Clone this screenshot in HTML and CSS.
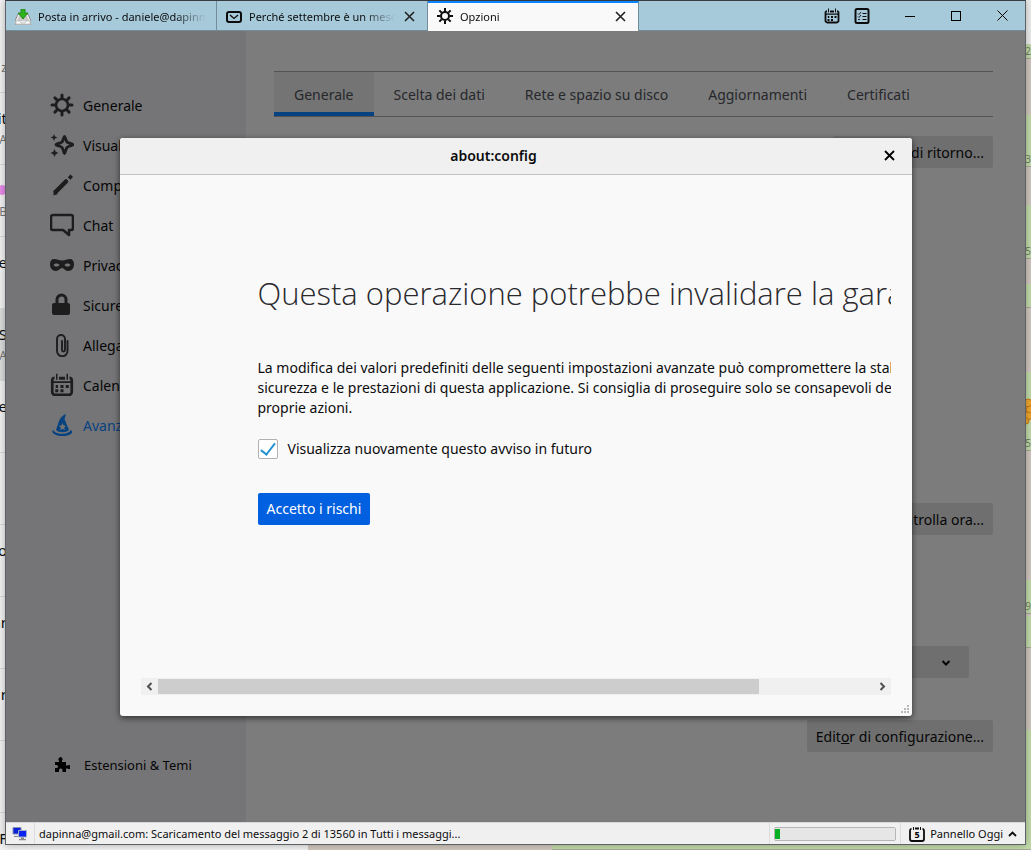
FILE: index.html
```html
<!DOCTYPE html>
<html lang="it">
<head>
    <meta charset="UTF-8">
    <meta name="viewport" content="width=device-width, initial-scale=1.0">
    <title>Opzioni</title>
    <link rel="stylesheet" href="styles.css">
</head>
<body>

    <!-- Chat window behind the mail client -->
    <div class="desktop">
        <div class="chat-list">
            <div class="chat-row"><span>&nbsp;</span><small>z</small></div>
            <div class="chat-row"><span>it</span><small>A</small></div>
            <div class="chat-row"><i class="dot"></i><small>B</small></div>
            <div class="chat-row"><span>e</span></div>
            <div class="chat-row selected"><span>S</span><small>A</small></div>
            <div class="chat-row"><span>e</span></div>
            <div class="chat-row"></div>
            <div class="chat-row"><span>o</span></div>
            <div class="chat-row"><span>ar</span></div>
            <div class="chat-row"><span>r</span></div>
            <div class="chat-row"></div>
            <div class="chat-row"><span>F</span></div>
        </div>
        <div class="chat-wall"></div>
        <div class="bubbles">
            <div class="bubble first">2</div>
            <div class="bubble second">3</div>
            <div class="bubble third">5</div>
            <div class="bubble fourth"></div>
            <div class="bubble fifth">5</div>
            <div class="bubble sixth">9</div>
            <div class="bubble seventh"></div>
            <div class="bubble last"></div>
            <svg class="grapes" width="8" height="30" viewBox="0 0 8 30"><g fill="#f0a72c" stroke="#c87b18"><circle cx="3" cy="5" r="4"/><circle cx="5" cy="12" r="4"/><circle cx="3" cy="18" r="4"/><circle cx="1" cy="23" r="3"/></g></svg>
        </div>
    </div>

    <div class="window">
        <header class="titlebar">
            <nav class="tabs">
                <div class="tab">
                    <svg class="icon16" viewBox="0 0 16 16"><path d="M3 5h10l3 7v4H0v-4z" fill="#eee" stroke="#8b8b8b"/><path d="M2 12l2-5h8l2 5z" fill="#c9c9c9"/><path d="M1 12h4l1 2h4l1-2h4v3H1z" fill="#fff" stroke="#aaa" stroke-width=".6"/><path d="M6 0h4v4h3l-5 6-5-6h3z" fill="#2fb41c" stroke="#187c0d" stroke-width=".8"/></svg>
                    <span class="tab-text">Posta in arrivo - daniele@dapinna.com</span>
                </div>
                <div class="tab">
                    <svg class="icon16" viewBox="0 0 16 16"><rect x="1" y="3" width="14" height="10" rx="2" fill="none" stroke="#0c0c0d" stroke-width="2"/><path d="M4 6l4 3.5L12 6" fill="none" stroke="#0c0c0d" stroke-width="1.3"/></svg>
                    <span class="tab-text">Perché settembre è un mese importante</span>
                    <button class="close" aria-label="Chiudi scheda"><svg width="11" height="11" viewBox="0 0 11 11"><path d="M1 1l9 9M10 1l-9 9"/></svg></button>
                </div>
                <div class="tab active">
                    <svg class="icon16" viewBox="0 0 24 24"><circle cx="12" cy="12" r="6" fill="none" stroke="#0c0c0d" stroke-width="3"/><path d="M12 0v5M12 19v5M0 12h5M19 12h5M3.5 3.5L7 7M17 17l3.500 3.500M20.500 3.500L17 7M7 17l-3.500 3.500" stroke="#0c0c0d" stroke-width="3"/></svg>
                    <span class="tab-text">Opzioni</span>
                    <button class="close" aria-label="Chiudi scheda"><svg width="11" height="11" viewBox="0 0 11 11"><path d="M1 1l9 9M10 1l-9 9"/></svg></button>
                </div>
            </nav>
            <div class="tab-tools">
                <button aria-label="Calendario"><svg class="icon16" viewBox="0 0 16 16"><use href="#calendar"/></svg></button>
                <button aria-label="Attività"><svg class="icon16" viewBox="0 0 16 16"><rect x="1.500" y="1" width="13" height="14" rx="1.500" fill="none" stroke="#0c0c0d" stroke-width="2"/><path d="M8.500 5.500h4M8.500 8.500h4M8.500 11.500h4" stroke="#0c0c0d"/><path d="M4 5.500l1 1 2-2.500M4 8.500l1 1L7 7M4 11.500h2" fill="none" stroke="#0c0c0d" stroke-width=".9"/></svg></button>
            </div>
            <div class="window-buttons">
                <button aria-label="Riduci"><svg width="10" height="10"><path d="M0 5.500h10" stroke="#000"/></svg></button>
                <button aria-label="Ingrandisci"><svg width="10" height="10"><rect x=".5" y=".5" width="9" height="9" fill="none" stroke="#000"/></svg></button>
                <button aria-label="Chiudi"><svg width="11" height="11"><path d="M.5.5l10 10M10.500.5l-10 10" stroke="#000"/></svg></button>
            </div>
        </header>

        <div class="content">
            <aside class="sidebar">
                <a href="#" class="category"><svg viewBox="0 0 24 24"><circle cx="12" cy="12" r="6" class="line" stroke-width="2.600"/><path d="M12 2v3M12 19v3M2 12h3M19 12h3M4.900 4.900L7 7M17 17l2.100 2.100M19.100 4.900L17 7M7 17l-2.100 2.100" class="line" stroke-width="3"/></svg>Generale</a>
                <a href="#" class="category"><svg viewBox="0 0 24 24"><path d="M14.500 3.500c.9 0 1.200 4.200 2.500 5.500s6 1.700 6 2.700-4.700 1.400-6 2.700-1.600 6.100-2.500 6.100-1.200-4.800-2.500-6.100-6-1.700-6-2.700S10.700 10.300 12 9s1.600-5.500 2.500-5.500z" class="line" stroke-width="2.800"/><path d="M4 1l1 2.500L7.500 4.500 5 5.500 4 8 3 5.500.5 4.500 3 3.500zM4.500 16l1.200 2.800L8.500 20l-2.800 1.200L4.500 24l-1.200-2.800L.5 20l2.800-1.200z"/></svg>Visualizzazione</a>
                <a href="#" class="category"><svg viewBox="0 0 24 24"><path d="M6 18.500L16 8.500" class="line" stroke-width="4.500"/><path d="M20.500 1.500l2.500 2.500-2.700 2.700-2.500-2.500z"/><path d="M3.500 17l4.500 4-4.500 1.500z"/></svg>Composizione</a>
                <a href="#" class="category"><svg viewBox="0 0 24 24"><path d="M3 2h18a2 2 0 0 1 2 2v11a2 2 0 0 1-2 2h-2v5l-6-5H3a2 2 0 0 1-2-2V4a2 2 0 0 1 2-2z" class="line" stroke-width="2.600"/></svg>Chat</a>
                <a href="#" class="category"><svg viewBox="0 0 24 24"><path fill-rule="evenodd" d="M4 6c3 0 5 1.500 8 1.500S17 6 20 6c2.500 0 4 2 4 5 0 4-2 7-6 7-3 0-4-3-6-3s-3 3-6 3c-4 0-6-3-6-7 0-3 1.500-5 4-5zM3.500 12C5 14 8 14 9.500 12 8 10 5 10 3.500 12zm11 0c1.500 2 4.500 2 6 0-1.500-2-4.500-2-6 0z"/></svg>Privacy</a>
                <a href="#" class="category"><svg viewBox="0 0 24 24"><path d="M7 11V6.500a4.500 4.500 0 0 1 9 0V11" class="line" stroke-width="3"/><rect x="2" y="10" width="18" height="12" rx="2"/></svg>Sicurezza</a>
                <a href="#" class="category"><svg viewBox="0 0 24 24"><path d="M12 8v9a1.500 1.500 0 0 0 3 0V6a4 4 0 0 0-8 0v12a5 5 0 0 0 10.500 0V8" class="line" stroke-width="1.900"/></svg>Allegati</a>
                <a href="#" class="category"><svg viewBox="0 0 16 16"><g id="calendar"><path d="M3 3.200a1.500 1.500 0 0 0-1.500 1.500v8A1.800 1.800 0 0 0 3.300 14.500h9.400a1.800 1.800 0 0 0 1.800-1.800v-8A1.500 1.500 0 0 0 13 3.200" fill="none" stroke="currentColor" stroke-width="1.800"/><path d="M6 2.500h4v2H6zM2 5.500h12v1.200H2zM4 .5h1v4H4zM11 .5h1v4h-1zM7 8h2v2H7zM10.500 8h2v2h-2zM3.500 10.900h2v2h-2zM7 10.900h2v2H7zM3.800 8h1.500v2H3.800z" fill="currentColor"/></g></svg>Calendario</a>
                <a href="#" class="category current"><svg viewBox="0 0 24 24"><path fill-rule="evenodd" d="M16 1l-1.500 5L19 17c-3 3-10 3-13 0L9 8c1-3 4-6 7-7zm-3.500 9l-1.100 2.500-2.600.3 2 1.700-.6 2.700 2.300-1.400 2.300 1.400-.6-2.700 2-1.700-2.600-.3z"/><path d="M3.500 17c1 5 16 5 17 0 3 1 1.500 3.500-.5 4.500-4 2-11 2-15 0-2-1-4-3.500-1.500-4.500z"/></svg>Avanzate</a>
                <a href="#" class="addons"><svg viewBox="0 0 16 16"><path d="M1 5h4V3.500a2 2 0 1 1 3 0V5h4v3.500h1.500a2 2 0 1 1 0 3H12V15H8.500v-2a1.800 1.800 0 0 0-3.500 0v2H1v-4h1.500a1.500 1.500 0 0 0 0-3H1z"/></svg>Estensioni &amp; Temi</a>
            </aside>

            <main class="main">
                <nav class="pane-tabs">
                    <a href="#" class="pane-tab selected">Generale</a>
                    <a href="#" class="pane-tab">Scelta dei dati</a>
                    <a href="#" class="pane-tab">Rete e spazio su disco</a>
                    <a href="#" class="pane-tab">Aggiornamenti</a>
                    <a href="#" class="pane-tab">Certificati</a>
                </nav>
                <div class="settings">
                    <button class="grey-button">Conferme di ritorno...</button>
                    <button class="grey-button">Controlla ora...</button>
                    <div class="select-wrap">
                        <select aria-label="Lingua"><option>Italiano</option></select>
                        <svg class="arrow" width="10" height="6" viewBox="0 0 10 6"><path d="M1.500 1L5 4.500 8.500 1" fill="none" stroke="#0c0c0d" stroke-width="2"/></svg>
                    </div>
                    <button class="grey-button">Edit<u>o</u>r di configurazione...</button>
                </div>
            </main>

            <!-- Subdialog over the options page -->
            <div class="overlay">
                <section class="dialog" role="dialog" aria-labelledby="dialog-title">
                    <div class="dialog-header">
                        <h2 id="dialog-title">about:config</h2>
                        <button class="close bold" aria-label="Chiudi"><svg width="11" height="11" viewBox="0 0 11 11"><path d="M1 1l9 9M10 1l-9 9"/></svg></button>
                    </div>
                    <div class="frame">
                        <div class="warning">
                            <h1>Questa operazione potrebbe invalidare la garanzia</h1>
                            <p>La modifica dei valori predefiniti delle seguenti impostazioni avanzate può compromettere la stabilità, la<br>sicurezza e le prestazioni di questa applicazione. Si consiglia di proseguire solo se consapevoli delle<br>proprie azioni.</p>
                            <label class="check"><input type="checkbox" checked>Visualizza nuovamente questo avviso in futuro</label>
                            <button class="accept">Accetto i rischi</button>
                        </div>
                        <div class="scrollbar">
                            <button aria-label="Sinistra"><svg width="7" height="9" viewBox="0 0 7 9"><path d="M5.500 1L2 4.500 5.500 8"/></svg></button>
                            <div class="track"><div class="thumb"></div></div>
                            <button aria-label="Destra"><svg width="7" height="9" viewBox="0 0 7 9"><path d="M1.500 1L5 4.500 1.500 8"/></svg></button>
                        </div>
                    </div>
                    <svg class="grip" width="8" height="8" viewBox="0 0 8 8"><path d="M6 0h2v2H6zM3 3h2v2H3zM6 3h2v2H6zM0 6h2v2H0zM3 6h2v2H3zM6 6h2v2H6z" fill="#b8b8b8"/></svg>
                </section>
            </div>
        </div>

        <footer class="statusbar">
            <div class="online"><svg width="16" height="14" viewBox="0 0 16 14"><path d="M1 .5h8v6.500H1z" fill="#0b22d8" stroke="#8791b5"/><path d="M2 9h4v1H2z" fill="#888"/><path d="M6.500 3.500h8v6.500h-8z" fill="#0b22f0" stroke="#a5acc5"/><path d="M9 10.500h3v1.500H9zM7 12h7v1.200H7z" fill="#888"/></svg></div>
            <div class="status-text">dapinna@gmail.com: Scaricamento del messaggio 2 di 13560 in Tutti i messaggi...</div>
            <div class="meter"><progress value="4" max="100" aria-label="Scaricamento"></progress></div>
            <button class="today">
                <svg width="16" height="16" viewBox="0 0 16 16"><path d="M2.500 3Q1 3 1 5v8q0 2 2 2h10q2 0 2-2V5q0-2-1.500-2M6 2.500h4" fill="none" stroke="#0c0c0d" stroke-width="1.800"/><path d="M4.500 1v3M11.500 1v3" stroke="#0c0c0d"/><text x="8" y="12" text-anchor="middle" class="day">5</text></svg>
                Pannello Oggi
                <svg width="9" height="6" viewBox="0 0 9 6"><path d="M1 5l3.500-3.500L8 5" fill="none" stroke="#0c0c0d" stroke-width="1.800"/></svg>
            </button>
        </footer>
    </div>

</body>
</html>
```

FILE: styles.css
```css
* {
    box-sizing: border-box;
}
body {
    margin: 0;
    height: 100vh;
    padding: 0 5px 5px 5px;
    overflow: hidden;
    font-family: "Noto Sans", "Open Sans", sans-serif;
    font-size: 14px;
    color: #0c0c0d;
}
button {
    font: inherit;
    color: inherit;
    border: none;
    background: none;
    padding: 0;
}
a {
    color: inherit;
    text-decoration: none;
}
.icon16 {
    width: 16px;
    height: 16px;
    flex: none;
}

/* desktop behind the window */
.desktop {
    position: absolute;
    inset: 0;
    background: #efefef;
    overflow: hidden;
}
.chat-list {
    width: 308px;
    padding-top: 21px;
    background: #f3f3f3;
}
.chat-row {
    height: 72px;
    width: 7px;
    padding-top: 14px;
    border-bottom: 1px solid #dcdcdc;
    display: flex;
    flex-direction: column;
    align-items: flex-end;
    line-height: 22px;
    font-size: 15px;
    overflow: hidden;
}
.chat-row small {
    font-size: 12px;
    color: #777;
}
.chat-row.selected {
    background: #dcdedd;
}
.dot {
    width: 10px;
    height: 10px;
    margin: 6px 0;
    border-radius: 50%;
    background: #e88be8;
    flex: none;
}
.chat-wall {
    position: absolute;
    left: 308px;
    right: 0;
    top: 44px;
    bottom: 0;
    background: #d2c8bf;
}
.bubbles {
    position: absolute;
    right: 0;
    top: 0;
    bottom: 0;
    width: 479px;
}
.bubble {
    position: absolute;
    left: 0;
    right: 0;
    background: #c3dcaa;
    border-bottom: 1px solid #aaa79a;
    color: #6f8064;
    font-size: 10px;
    line-height: 14px;
    display: flex;
    justify-content: flex-end;
    align-items: flex-end;
}
.first { top: 44px; height: 15px; }
.second { top: 115px; height: 52px; }
.third { top: 205px; height: 54px; }
.fourth { top: 284px; height: 24px; }
.fifth { top: 372px; height: 79px; }
.sixth { top: 580px; height: 34px; }
.seventh { top: 616px; height: 32px; }
.last { top: 730px; bottom: 0; }
.grapes {
    position: absolute;
    right: -2px;
    top: 398px;
}

/* main window */
.window {
    position: relative;
    height: 100%;
    display: flex;
    flex-direction: column;
    border: 1px solid #5d6266;
    border-top-color: #373b40;
    box-shadow: 0 0 8px rgba(0, 0, 0, 0.3);
}
.titlebar {
    height: 30px;
    flex: none;
    display: flex;
    background: #a7cadb;
    border-bottom: 1px solid #718d9a;
    font-size: 11px;
}
.tabs {
    display: flex;
    flex: 1;
}
.tab {
    width: 211px;
    height: 29px;
    display: flex;
    align-items: center;
    padding: 2px 10px 0 9px;
    gap: 7px;
    border-right: 1px solid #718d9a;
}
.tab.active {
    height: 30px;
    background: #f9f9fa;
    border-top: 2px solid #0a84ff;
    padding-top: 0;
    padding-bottom: 2px;
}
.tab-text {
    flex: 1;
    white-space: nowrap;
    overflow: hidden;
    mask-image: linear-gradient(to left, transparent, #000 32px);
}
.close {
    display: flex;
    align-items: center;
    justify-content: center;
    width: 15px;
    height: 20px;
}
.close path {
    stroke: #222;
    stroke-width: 1.6;
}
.close.bold path {
    stroke: #000;
    stroke-width: 1.8;
}
.tab-tools {
    display: flex;
    gap: 14px;
    margin-right: 17px;
}
.tab-tools button {
    display: flex;
    align-items: center;
}
.window-buttons {
    display: flex;
}
.window-buttons button {
    width: 46px;
    display: flex;
    align-items: center;
    justify-content: center;
}

.content {
    flex: 1;
    min-height: 0;
    display: flex;
    position: relative;
    background: #f9f9fa;
}
.sidebar {
    width: 240px;
    flex: none;
    background: #ebebef;
    padding: 54px 0 42px 44px;
    display: flex;
    flex-direction: column;
}
.category {
    height: 40px;
    display: flex;
    align-items: center;
    gap: 9px;
}
.category svg {
    width: 24px;
    height: 24px;
    fill: #3a3a3c;
    color: #3a3a3c;
}
.category .line {
    fill: none;
    stroke: #3a3a3c;
    stroke-linecap: round;
    stroke-linejoin: round;
}
.category.current {
    color: #0a84ff;
}
.category.current svg {
    fill: #0a84ff;
}
.addons {
    margin-top: auto;
    height: 30px;
    padding-left: 4px;
    display: flex;
    align-items: center;
    gap: 14px;
    font-size: 13px;
}
.addons svg {
    width: 16px;
    height: 16px;
}
.main {
    flex: 1;
    padding: 40px 32px 0 28px;
}
.pane-tabs {
    height: 46px;
    display: flex;
    border-top: 1px solid #a8a8a9;
    border-bottom: 1px solid #a8a8a9;
    color: #4d5158;
}
.pane-tab {
    padding: 0 20px;
    line-height: 46px;
    white-space: nowrap;
}
.pane-tab.selected {
    background: #e9e9ea;
    box-shadow: inset 0 -4px #0a84ff;
}
.settings {
    display: grid;
    grid-template-rows: 367px 143px 74px auto;
    justify-items: end;
    align-items: start;
    padding-top: 19px;
}
.grey-button {
    height: 32px;
    padding: 0 9px;
    background: #dededf;
    border-radius: 2px;
}
.select-wrap {
    position: relative;
    margin-right: 24px;
}
.select-wrap select {
    appearance: none;
    width: 300px;
    height: 32px;
    border: none;
    border-radius: 2px;
    padding: 0 9px;
    background: #dededf;
    font: inherit;
}
.arrow {
    position: absolute;
    right: 18px;
    top: 14px;
}

/* dialog */
.overlay {
    position: absolute;
    inset: 0;
    background: rgba(0, 0, 0, 0.5);
    display: flex;
    align-items: center;
    justify-content: center;
}
.dialog {
    position: relative;
    width: 792px;
    max-width: 90%;
    height: 578px;
    display: flex;
    flex-direction: column;
    background: #f9f9fa;
    border-radius: 3px;
    box-shadow: 0 2px 6px rgba(0, 0, 0, 0.6);
}
.dialog-header {
    height: 37px;
    flex: none;
    display: flex;
    align-items: center;
    padding-right: 15px;
    background: #f0f0f0;
    border-bottom: 1px solid #c1c1c1;
    border-radius: 3px 3px 0 0;
}
.dialog-header h2 {
    flex: 1;
    margin: 0;
    padding-right: 14px;
    text-align: center;
    font-size: 14px;
    font-weight: 600;
}
.frame {
    flex: 1;
    margin: 0 21px 21px 21px;
    overflow: hidden;
    display: flex;
    flex-direction: column;
}
.warning {
    flex: 1;
    padding: 96px 0 0 117px;
    white-space: nowrap;
}
.warning h1 {
    margin: 0;
    font-family: "Open Sans", "Noto Sans", sans-serif;
    font-size: 31px;
    line-height: 44px;
    font-weight: 300;
    color: #2a2a2e;
}
.warning p {
    margin: 43px 0 20px 0;
    line-height: 20px;
}
.check {
    display: flex;
    align-items: center;
    gap: 10px;
    height: 22px;
}
.check input {
    appearance: none;
    width: 20px;
    height: 20px;
    margin: 0;
    border: 1px solid #b1b1b1;
    border-radius: 2px;
    background: #fff;
    display: flex;
    justify-content: center;
}
.check input:checked::before {
    content: "";
    width: 6px;
    height: 13px;
    border: solid #2292d0;
    border-width: 0 2px 2px 0;
    transform: rotate(38deg);
}
.accept {
    margin-top: 33px;
    height: 32px;
    padding: 0 9px;
    background: #0060df;
    color: #fff;
    border-radius: 2px;
}
.scrollbar {
    height: 17px;
    flex: none;
    display: flex;
    background: #f0f0f0;
}
.scrollbar button {
    width: 17px;
    display: flex;
    align-items: center;
    justify-content: center;
}
.scrollbar path {
    fill: none;
    stroke: #505050;
    stroke-width: 2;
}
.track {
    flex: 1;
    padding: 1px 0;
}
.thumb {
    width: 84%;
    height: 100%;
    background: #cdcdcd;
}
.grip {
    position: absolute;
    right: 3px;
    bottom: 3px;
}

/* status bar */
.statusbar {
    height: 22px;
    flex: none;
    display: flex;
    align-items: stretch;
    background: #f0f0f0;
    border-top: 1px solid #d7d7d7;
    font-size: 11px;
}
.statusbar > * {
    display: flex;
    align-items: center;
}
.online {
    width: 29px;
    padding-left: 6px;
    border-right: 1px solid #dcdcdc;
}
.status-text {
    flex: 1;
    padding-left: 4px;
    white-space: nowrap;
}
.meter {
    padding: 0 4px;
    border-left: 1px solid #dcdcdc;
    border-right: 1px solid #dcdcdc;
}
.meter progress {
    appearance: none;
    width: 122px;
    height: 14px;
    border: 1px solid #b5b5b5;
    border-radius: 2px;
    background: #e6e6e6;
}
.meter progress::-webkit-progress-bar {
    background: #e6e6e6;
    padding: 1px 0;
}
.meter progress::-webkit-progress-value {
    background: #06b025;
}
.today {
    gap: 5px;
    padding: 0 8px 0 8px;
}
.day {
    font-size: 9px;
    font-weight: bold;
}
```
